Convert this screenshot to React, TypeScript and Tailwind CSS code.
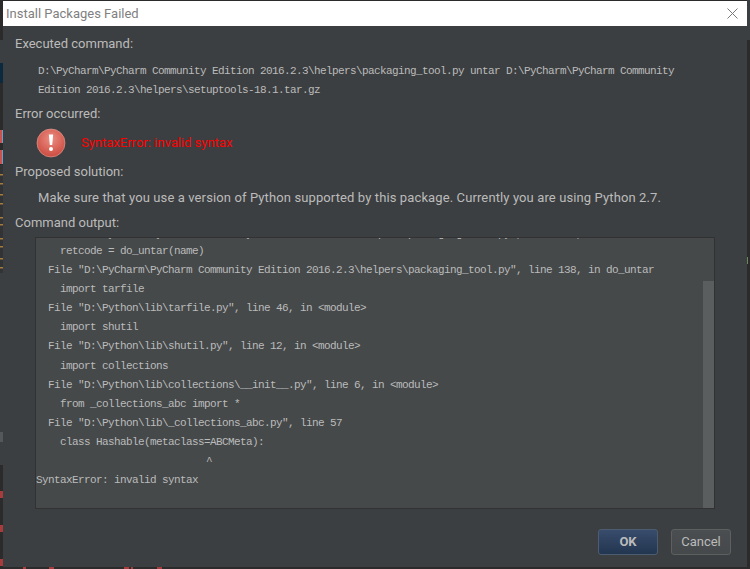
const outputLines = [
  { text: 'File "D:\\PyCharm\\PyCharm Community Edition 2016.2.3\\helpers\\packaging_tool.py", line 125, in main', indent: "pl-3 h-[17.5px]" },
  { text: "retcode = do_untar(name)", indent: "pl-6" },
  { text: 'File "D:\\PyCharm\\PyCharm Community Edition 2016.2.3\\helpers\\packaging_tool.py", line 138, in do_untar', indent: "pl-3" },
  { text: "import tarfile", indent: "pl-6" },
  { text: 'File "D:\\Python\\lib\\tarfile.py", line 46, in <module>', indent: "pl-3" },
  { text: "import shutil", indent: "pl-6" },
  { text: 'File "D:\\Python\\lib\\shutil.py", line 12, in <module>', indent: "pl-3" },
  { text: "import collections", indent: "pl-6" },
  { text: 'File "D:\\Python\\lib\\collections\\__init__.py", line 6, in <module>', indent: "pl-3" },
  { text: "from _collections_abc import *", indent: "pl-6" },
  { text: 'File "D:\\Python\\lib\\_collections_abc.py", line 57', indent: "pl-3" },
  { text: "class Hashable(metaclass=ABCMeta):", indent: "pl-6" },
  { text: "^", indent: "pl-[170px]" },
  { text: "SyntaxError: invalid syntax", indent: "" },
];

const orangeTicks = [174, 183, 194, 203, 217, 224, 238, 246, 258, 267];
const redTicks = [491, 525, 559];

const ErrorIcon = () => (
  <svg width="30" height="30" viewBox="0 0 30 30">
    <defs>
      <radialGradient id="err" cx="50%" cy="35%" r="70%">
        <stop offset="0%" stopColor="#ec8d82" />
        <stop offset="100%" stopColor="#c9463b" />
      </radialGradient>
    </defs>
    <circle cx="15" cy="15" r="14" fill="url(#err)" stroke="#e9a39b" strokeWidth="0.6" />
    <path d="M12.8 6.5h4.4l-1 10.5h-2.4z" fill="#fff" />
    <circle cx="15" cy="21" r="2" fill="#fff" />
  </svg>
);

// the editor window showing behind the dialog
const LeftStrip = () => (
  <svg width="3" height="569" className="block shrink-0">
    <rect width="3" height="569" fill="#2b2b2b" />
    <rect y="40" width="3" height="23" fill="#3c3f41" />
    <rect y="63" width="3" height="20" fill="#0d293e" />
    <rect y="130" width="2" height="13" fill="#c75450" />
    <rect x="2" y="130" width="1" height="13" fill="#6f9fc4" />
    <rect y="150" width="2" height="14" fill="#c75450" />
    <rect x="2" y="150" width="1" height="14" fill="#6f9fc4" />
    <rect y="165" width="3" height="108" fill="#313335" />
    {orangeTicks.map((y) => (
      <rect key={y} y={y} width="3" height="1.5" fill="#a67c3c" />
    ))}
    <rect y="273" width="3" height="192" fill="#3c3f41" />
    <rect y="432" width="3" height="10" fill="#55585a" />
    {redTicks.map((y) => (
      <rect key={y} y={y} width="3" height="7" fill="#a83c3c" />
    ))}
  </svg>
);

const RightStrip = () => (
  <svg width="3" height="569" className="block shrink-0">
    <rect width="3" height="569" fill="#2b2b2b" />
    <rect width="3" height="40" fill="#3c3f41" />
    <rect y="257" width="1" height="7" fill="#6a8759" />
  </svg>
);

const Label = ({ children, className = "" }: { children: string; className?: string }) => (
  <div className={`text-[13px] leading-[18px] text-[#bbbbbb] ${className}`}>{children}</div>
);

export default function App() {
  return (
    <div className="flex h-[569px] w-[750px] overflow-hidden bg-[#2b2b2b] font-['Roboto',sans-serif]">
      <LeftStrip />

      <div className="flex w-[744px] flex-col">
        <div className="h-px shrink-0 bg-[#2b2b2b]" />
        <div className="flex h-[25px] shrink-0 items-center justify-between bg-white pl-[3px] pr-[9px]">
          <span className="text-[13px] text-[#7f7f7f]">Install Packages Failed</span>
          <svg width="11" height="11" viewBox="0 0 11 11">
            <path d="M0.5 0.5l10 10M10.5 0.5l-10 10" stroke="#7a7a7a" strokeWidth="1" fill="none" />
          </svg>
        </div>

        <div className="flex h-[541px] shrink-0 flex-col bg-[#3c3f41] pl-3 pr-4">
          <Label className="mt-[9px]">Executed command:</Label>
          <div className="mt-[9px] w-[670px] pl-[23px] font-['Liberation_Mono',monospace] text-[11px] leading-[18.5px] tracking-[-0.6px] text-[#bbbbbb]">
            D:\PyCharm\PyCharm Community Edition 2016.2.3\helpers\packaging_tool.py untar D:\PyCharm\PyCharm Community
            Edition 2016.2.3\helpers\setuptools-18.1.tar.gz
          </div>

          <Label className="mt-[6px]">Error occurred:</Label>
          <div className="mt-[5px] flex h-[30px] items-center gap-[15px] pl-[21px]">
            <ErrorIcon />
            <span className="text-[13px] text-[#ff0000]">SyntaxError: invalid syntax</span>
          </div>

          <Label className="mt-[5px]">Proposed solution:</Label>
          <div className="mt-[8px] pl-[23px] text-[13px] leading-[18px] tracking-[0.115px] text-[#bbbbbb]">
            Make sure that you use a version of Python supported by this package. Currently you are using Python 2.7.
          </div>
          <Label className="mt-[7px]">Command output:</Label>

          <div className="mt-[5px] ml-5 flex h-[272px] w-[680px] overflow-hidden border border-[#323232] bg-[#45494a]">
            <div className="flex-1 overflow-hidden">
              <div className="-mt-[13.5px] font-['Liberation_Mono',monospace] text-[11px] leading-[19.1px] tracking-[-0.6px] text-[#bbbbbb]">
                {outputLines.map((line, i) => (
                  <div key={i} className={`whitespace-pre ${line.indent}`}>
                    {line.text}
                  </div>
                ))}
              </div>
            </div>
            <div className="flex w-[11px] shrink-0 flex-col pt-[43px]">
              <div className="flex-1 bg-[#5a5e5f]" />
            </div>
          </div>

          <div className="mt-[20px] flex justify-end gap-[13px]">
            <button className="h-[26px] w-[60px] rounded-[3px] border border-[#4d5c70] bg-gradient-to-b from-[#384c6c] to-[#233650] text-[13px] font-bold text-[#bbbbbb]">
              OK
            </button>
            <button className="h-[26px] w-[60px] rounded-[3px] border border-[#5e6060] bg-gradient-to-b from-[#4a4e50] to-[#45494b] text-[13px] text-[#bbbbbb]">
              Cancel
            </button>
          </div>
        </div>

        <svg width="744" height="2" className="block shrink-0">
          <rect x="20" width="3" height="2" fill="#a83c3c" />
          <rect x="46" width="5" height="2" fill="#a83c3c" />
          <rect x="121" width="5" height="2" fill="#a83c3c" />
          <rect x="128" width="2" height="2" fill="#a83c3c" />
          <rect x="154" width="5" height="2" fill="#a83c3c" />
        </svg>
      </div>

      <RightStrip />
    </div>
  );
}
